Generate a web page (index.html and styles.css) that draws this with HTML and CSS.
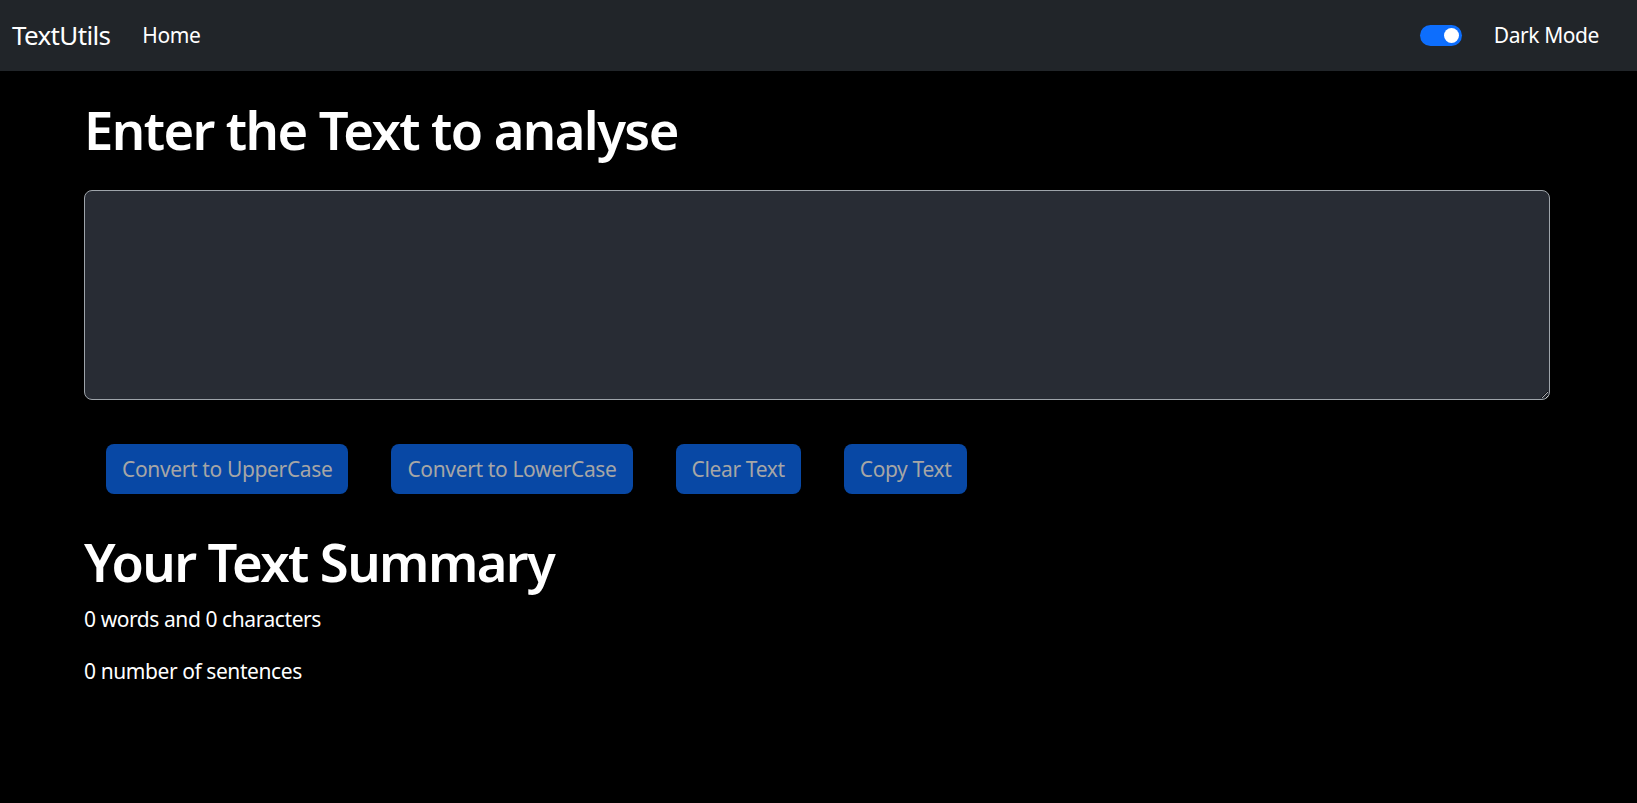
FILE: index.html
```html
<!DOCTYPE html>
<html lang="en">
<head>
<meta charset="utf-8">
<title>TextUtils</title>
<link rel="stylesheet" href="styles.css">
</head>
<body>
<nav class="navbar">
  <a class="brand" href="#">TextUtils</a>
  <ul class="nav-links">
    <li><a class="nav-link" href="#">Home</a></li>
  </ul>
  <div class="mode-switch">
    <span class="switch"><span class="knob"></span></span>
    <label class="switch-label">Dark Mode</label>
  </div>
</nav>
<main class="container">
  <h1 class="title">Enter the Text to analyse</h1>
  <textarea class="text-box"></textarea>
  <div class="actions">
    <button class="btn" disabled>Convert to UpperCase</button>
    <button class="btn" disabled>Convert to LowerCase</button>
    <button class="btn" disabled>Clear Text</button>
    <button class="btn" disabled>Copy Text</button>
  </div>
  <h1 class="title summary-title">Your Text Summary</h1>
  <p class="stat">0 words and 0 characters</p>
  <p class="stat">0 number of sentences</p>
</main>
</body>
</html>
```

FILE: styles.css
```css
* { box-sizing: border-box; }
html, body { margin: 0; padding: 0; }
body {
  background: #000;
  color: #fff;
  font-family: "Noto Sans", "Open Sans", sans-serif;
  font-size: 21px;
  line-height: 1.5;
  letter-spacing: -0.02em;
}
.navbar {
  height: 71px;
  background: #212529;
  display: flex;
  align-items: center;
  padding: 0 38px 0 12px;
}
.brand {
  color: #fff;
  text-decoration: none;
  font-size: 26px;
  letter-spacing: -0.025em;
  margin-right: 32px;
}
.nav-links {
  list-style: none;
  margin: 0;
  padding: 0;
  display: flex;
}
.nav-link {
  color: #fff;
  text-decoration: none;
  font-size: 21px;
}
.mode-switch {
  margin-left: auto;
  display: flex;
  align-items: center;
  gap: 32px;
}
.switch {
  width: 42px;
  height: 21px;
  border-radius: 11px;
  background: #0d6efd;
  display: flex;
  align-items: center;
  justify-content: flex-end;
  padding-right: 3px;
}
.knob {
  width: 15px;
  height: 15px;
  border-radius: 50%;
  background: #fff;
}
.switch-label { font-size: 21px; color: #fff; }
.container {
  padding: 27px 0 40px 84px;
  width: 1550px;
}
.title {
  font-size: 52.5px;
  font-weight: 600;
  letter-spacing: -0.03em;
  line-height: 63px;
  margin: 0 0 10.5px 0;
}
.text-box {
  display: block;
  width: 1466px;
  height: 210px;
  margin-top: 29px;
  background: #282c34;
  color: #fff;
  border: 1px solid #9ea4aa;
  border-radius: 8px;
  font: inherit;
  padding: 8px 16px;
}
.actions {
  display: flex;
  gap: 43px;
  margin: 44px 0 0 22px;
}
.btn {
  height: 50px;
  padding: 0 15px;
  border: 1px solid transparent;
  border-radius: 8px;
  background: rgb(8, 72, 165);
  color: #a6a6a6;
  font: inherit;
  font-size: 21px;
  letter-spacing: -0.017em;
  line-height: 1;
}
.summary-title { margin-top: 36px; }
.stat { margin: 0 0 21px 0; }
```
